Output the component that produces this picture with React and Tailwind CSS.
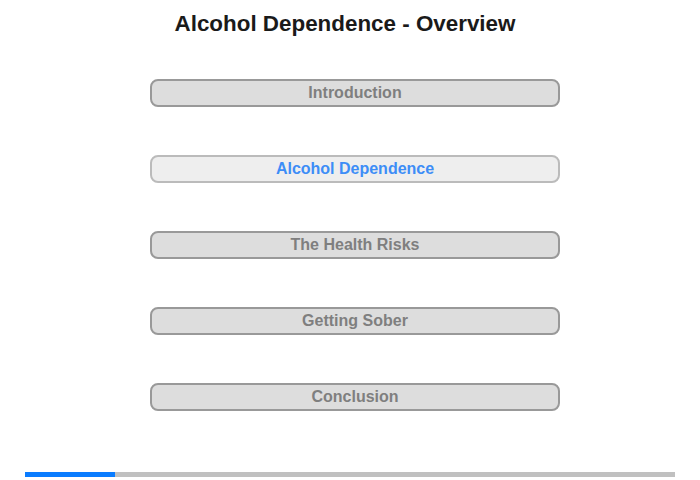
import React from 'react';

const sections = [
  { label: 'Introduction', active: false },
  { label: 'Alcohol Dependence', active: true },
  { label: 'The Health Risks', active: false },
  { label: 'Getting Sober', active: false },
  { label: 'Conclusion', active: false },
];

export default function App() {
  return (
    <div className="w-[700px] h-[480px] bg-white font-['Liberation_Sans',Arial,sans-serif] flex flex-col">
      <h1 className="pt-[11px] pr-[10px] text-center text-[22.4px] leading-[26px] font-bold text-[#1a1a1a]">
        Alcohol Dependence - Overview
      </h1>
      <div className="mt-[42px] flex flex-col gap-[48px] pl-[150px]">
        {sections.map((s) => (
          <button
            key={s.label}
            className={
              s.active
                ? 'w-[410px] h-[28px] rounded-[8px] border-2 border-[#bbbbbb] bg-[#eeeeee] text-[16px] font-bold text-[#3d8df7] leading-none'
                : 'w-[410px] h-[28px] rounded-[8px] border-2 border-[#999999] bg-[#dddddd] text-[16px] font-bold text-[#7f7f7f] leading-none'
            }
          >
            {s.label}
          </button>
        ))}
      </div>
      <div className="mt-auto mb-[3px] mx-[25px] h-[5px] bg-[#c0c0c0] flex">
        <div className="w-[90px] h-full bg-[#0a7cff]" />
      </div>
    </div>
  );
}
